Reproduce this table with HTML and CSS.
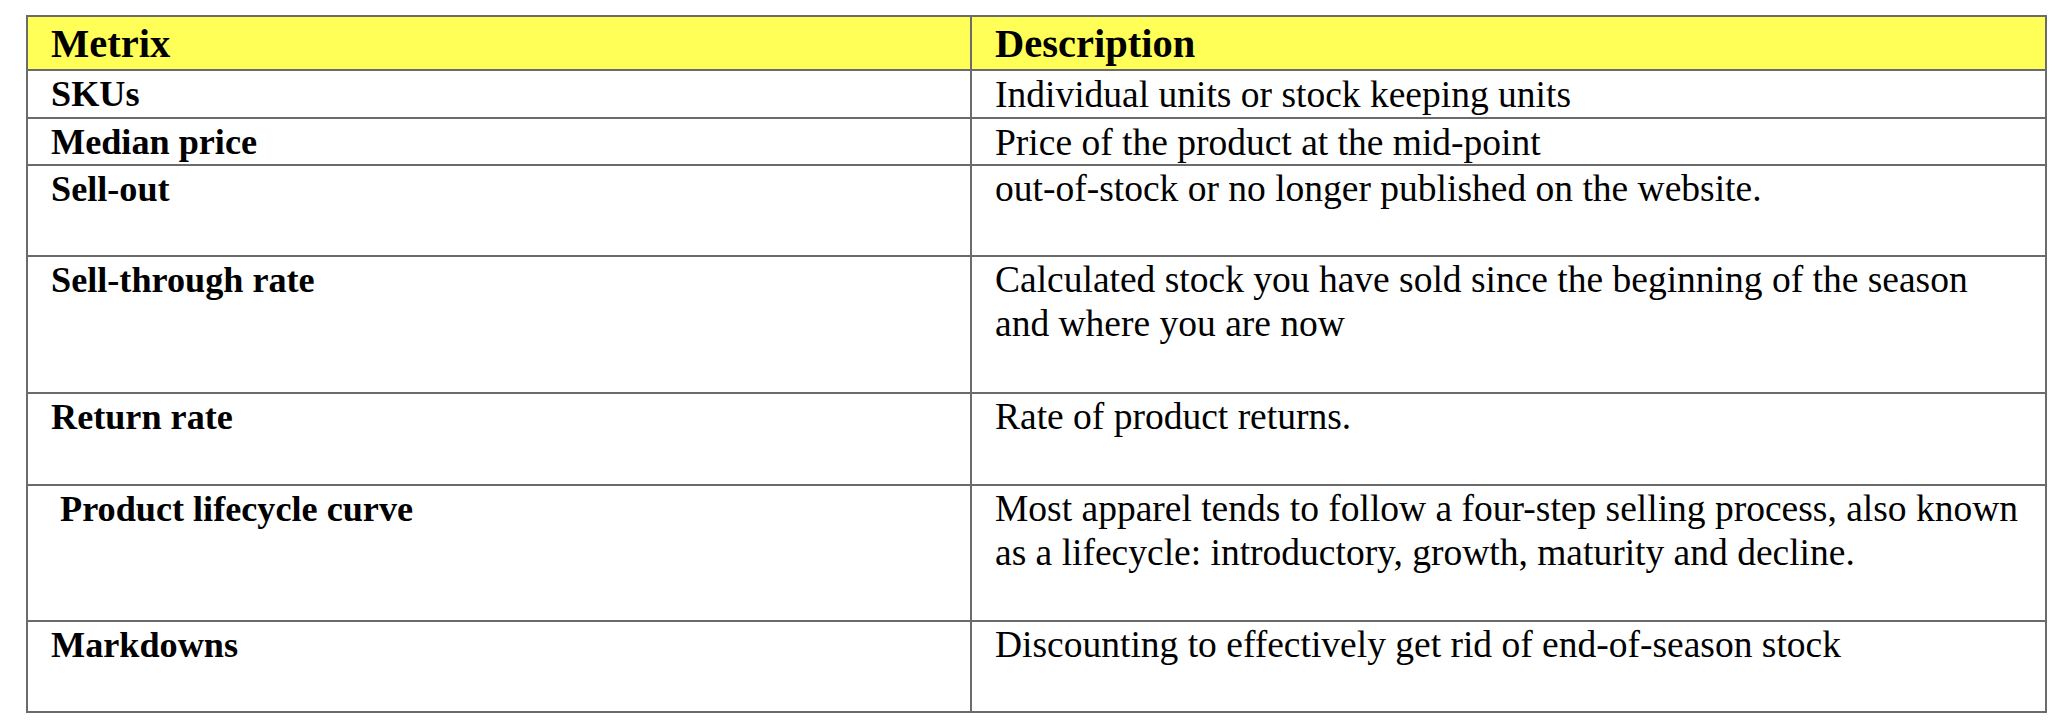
FILE: index.html
```html
<!DOCTYPE html>
<html lang="en">
<head>
<meta charset="utf-8">
<title>Metrix</title>
<link rel="stylesheet" href="styles.css">
</head>
<body>
<table class="metrics">
  <thead>
    <tr class="head-row">
      <th class="col-metric">Metrix</th>
      <th class="col-desc">Description</th>
    </tr>
  </thead>
  <tbody>
    <tr class="lines-1 first">
      <td class="metric">SKUs</td>
      <td class="desc">Individual units or stock keeping units</td>
    </tr>
    <tr class="lines-1">
      <td class="metric">Median price</td>
      <td class="desc">Price of the product at the mid-point</td>
    </tr>
    <tr class="lines-2">
      <td class="metric">Sell-out</td>
      <td class="desc">out-of-stock or no longer published on the website.</td>
    </tr>
    <tr class="lines-3 tall">
      <td class="metric">Sell-through rate</td>
      <td class="desc">Calculated stock you have sold since the beginning of the season and where you are now</td>
    </tr>
    <tr class="lines-2 tall">
      <td class="metric">Return rate</td>
      <td class="desc">Rate of product returns.</td>
    </tr>
    <tr class="lines-3">
      <td class="metric">&nbsp;Product lifecycle curve</td>
      <td class="desc">Most apparel tends to follow a four-step selling process, also known as a lifecycle: introductory, growth, maturity and decline.</td>
    </tr>
    <tr class="lines-2">
      <td class="metric">Markdowns</td>
      <td class="desc">Discounting to effectively get rid of end-of-season stock</td>
    </tr>
  </tbody>
</table>
</body>
</html>
```

FILE: styles.css
```css
html, body {
  margin: 0;
  padding: 0;
  background: #ffffff;
}

body {
  padding: 15px 0 0 26px;
  font-family: "Liberation Serif", "Times New Roman", serif;
  color: #000000;
}

.metrics {
  border-collapse: separate;
  border-spacing: 0;
  table-layout: fixed;
  width: 2021px;
  border-top: 2px solid #6b6b6b;
  border-left: 2px solid #6b6b6b;
}

.metrics th,
.metrics td {
  box-sizing: border-box;
  border-right: 2px solid #6b6b6b;
  border-bottom: 2px solid #6b6b6b;
  vertical-align: top;
  text-align: left;
  padding: 1px 20px 0 23px;
}

.col-metric {
  width: 944px;
}

.head-row {
  height: 52px;
}

.head-row th {
  background: #ffff57;
  font-size: 40.5px;
  font-weight: bold;
  line-height: 50px;
  padding-top: 2px;
}

.metric {
  font-size: 36.2px;
  font-weight: bold;
  line-height: 44px;
}

.desc {
  font-size: 37.5px;
  font-weight: normal;
  line-height: 44.6px;
}

.lines-1 .metric,
.lines-1 .desc {
  line-height: 43px;
  padding-top: 1.5px;
}

.lines-1 {
  height: 46px;
}

.lines-1.first {
  height: 48px;
}

.lines-2 {
  height: 91px;
}

.lines-2.tall {
  height: 92px;
}

.lines-3 {
  height: 136px;
}

.lines-3.tall {
  height: 137px;
}
```
